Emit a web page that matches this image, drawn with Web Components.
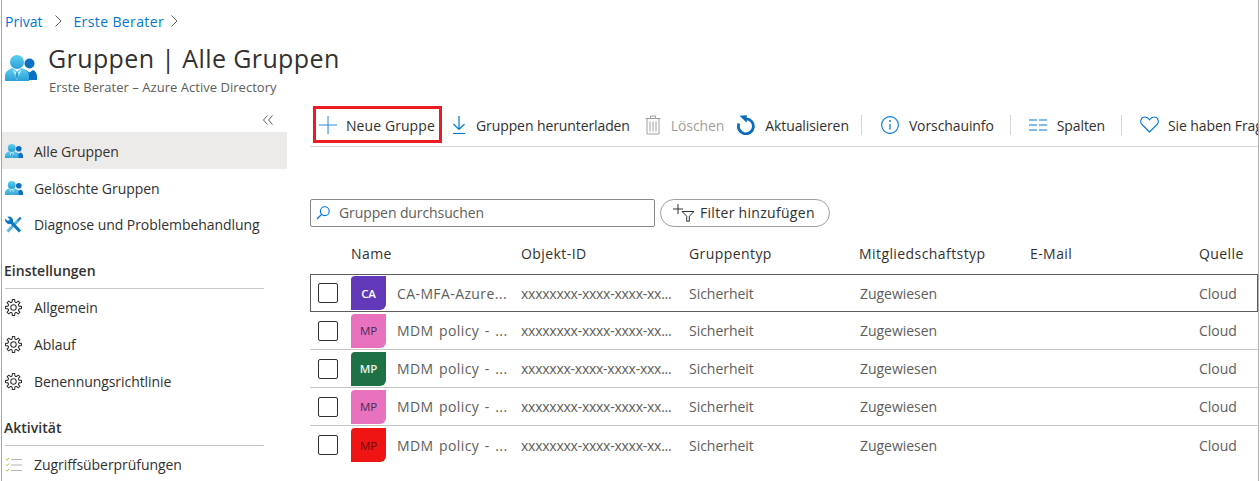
<!DOCTYPE html>
<html lang="de">
<head>
<meta charset="utf-8">
<title>Gruppen</title>
<style>
html, body { margin: 0; padding: 0; background: #fff; }
body { font-family: "Open Sans", "Noto Sans", sans-serif; color: #323130; width: 1260px; height: 481px; overflow: hidden; }
</style>
</head>
<body>
<group-page></group-page>
<script>
// small helpers for repeated icons
function gearPath() {
  let d = "";
  const teeth = 8, cx = 9, cy = 9;
  for (let i = 0; i < teeth; i++) {
    const a = (i / teeth) * Math.PI * 2;
    const step = (Math.PI * 2) / teeth;
    const pts = [
      [5.8, a - step * 0.5], [6.2, a - step * 0.3], [8.5, a - step * 0.18], [8.5, a + step * 0.18], [6.2, a + step * 0.3],
    ];
    pts.forEach((p, j) => {
      const x = (cx + p[0] * Math.cos(p[1])).toFixed(2);
      const y = (cy + p[0] * Math.sin(p[1])).toFixed(2);
      d += (i === 0 && j === 0 ? "M" : "L") + x + " " + y + " ";
    });
  }
  return d + "Z";
}

const ICONS = {
  gear: `<svg width="17" height="17" viewBox="0 0 18 18"><path d="${gearPath()}" fill="none" stroke="#323130" stroke-width="1.1"/><circle cx="9" cy="9" r="2.9" fill="none" stroke="#323130" stroke-width="1.1"/></svg>`,
  wrench: `<svg width="18" height="18" viewBox="0 0 18 18"><path d="M2.500 15.500L13.500 4" stroke="#59b4d9" stroke-width="2.800"/><path d="M13 4.500L15.800 1.600" stroke="#0a7cc4" stroke-width="2.200"/><path d="M6 6L15 15.500" stroke="#0a78c2" stroke-width="3.200"/><path d="M2.200 .8L4.800 3.200 4 4.600 2.400 4.800 .4 2.600A4.200 4.200 0 0 0 5.400 8L8 5.600A4.200 4.200 0 0 0 2.200 .8Z" fill="#0a78c2"/></svg>`,
  review: `<svg width="18" height="18" viewBox="0 0 18 18"><g fill="none" stroke-width="1"><path d="M1 3l1.200 1.200L4 2M1 8.500l1.200 1.200L4 7.500M1 14l1.200 1.200L4 13" stroke="#a5c63b"/><path d="M6 3.500h11M6 9h11M6 14.500h11" stroke="#b4b4b4"/></g></svg>`,
  plus: `<svg width="18" height="18" viewBox="0 0 18 18"><path d="M9 0v18M0 9h18" stroke="#2b88d8" stroke-width="1"/><path d="M9.500 10v8" stroke="#83bdf0" stroke-width="1"/></svg>`,
  download: `<svg width="14" height="18" viewBox="0 0 14 18"><path d="M7 0v13M1.500 8L7 13.400 12.500 8" fill="none" stroke="#0078d4" stroke-width="1.200"/><path d="M1 17.500h12" stroke="#0078d4" stroke-width="1.200"/></svg>`,
  trash: `<svg width="16" height="20" viewBox="0 0 16 20"><g fill="none" stroke="#a19f9d" stroke-width="1"><path d="M.5 3.500h15M5.500 3.500v-2.500h5v2.500M2 3.500v15.500h12v-15.500M5 6.500v10M8 6.500v10M11 6.500v10"/></g></svg>`,
  refresh: `<svg width="18" height="20" viewBox="0 0 18 20"><path d="M9 3.800A7.500 7.500 0 1 1 1.900 8.600" fill="none" stroke="#0f6cbd" stroke-width="2.800"/><path d="M2.500 .8L9.800 .2V7.800Z" fill="#0f6cbd"/></svg>`,
  info: `<svg width="18" height="18" viewBox="0 0 18 18"><circle cx="9" cy="9" r="8.400" fill="none" stroke="#0078d4" stroke-width="1.100"/><path d="M9 7.800v6" stroke="#0078d4" stroke-width="1.200"/><circle cx="9" cy="5" r=".9" fill="#0078d4"/></svg>`,
  columns: `<svg width="18" height="12" viewBox="0 0 18 12"><path d="M0 1h8M10 1h8M0 6h8M10 6h8M0 11h8M10 11h8" stroke="#0078d4" stroke-width="1.100"/></svg>`,
  heart: `<svg width="19" height="17" viewBox="0 0 19 17"><path d="M9.500 16L2 8.500C-.5 6 .8 1 5 1c2.200 0 3.500 1.200 4.500 2.800C10.500 2.200 11.800 1 14 1c4.200 0 5.500 5 3 7.500Z" fill="none" stroke="#0078d4" stroke-width="1.100"/></svg>`,
  search: `<svg width="14" height="14" viewBox="0 0 14 14"><circle cx="8.800" cy="5.200" r="4.400" fill="none" stroke="#0078d4" stroke-width="1.100"/><path d="M5.600 8.400L1 13" stroke="#0078d4" stroke-width="1.300"/></svg>`,
  filter: `<svg width="22" height="18" viewBox="0 0 22 18"><path d="M5 0v10M0 5h10" stroke="#323130" stroke-width="1"/><path d="M9 7.500h12l-4.700 4.700v5h-2.600v-5Z" fill="none" stroke="#323130" stroke-width="1"/></svg>`,
};

let usersCount = 0;
function usersIcon(size) {
  const id = "g" + usersCount++;
  return `<svg width="${size}" height="${size * 0.8125}" viewBox="0 0 32 26">
    <defs><linearGradient id="${id}" x1="0" y1="0" x2="0" y2="1"><stop offset="0" stop-color="#5ed0f2"/><stop offset="1" stop-color="#2a9fd6"/></linearGradient></defs>
    <path d="M20 25V17l1-2 3.500 2.500L28 15c2.500 1 4 3.500 4 6.500V25Z" fill="#0b6fc4"/>
    <circle cx="24.500" cy="8.500" r="5" fill="#0b6fc4"/>
    <path d="M0 26v-5c0-4 3-6.500 7.500-8l4.500 3.500 4.500-3.500c4.500 1.500 7.500 4 7.500 8v5Z" fill="url(#${id})"/>
    <circle cx="12" cy="7" r="7" fill="url(#${id})"/>
    <path d="M7.500 14.500l4.500 11 4.500-11-4.500 3.500Z" fill="#bfeaf8"/>
    <path d="M11 17.500h2l.6 3.500-1.600 4-1.600-4Z" fill="#2a9fd6"/>
  </svg>`;
}

class PageHeader extends HTMLElement {
  constructor() {
    super();
    this.attachShadow({ mode: "open" });
    this.shadowRoot.innerHTML = `<style>
      :host { display: block; height: 104px; padding-left: 3px; }
      .crumbs { display: flex; align-items: center; height: 20px; padding-top: 11px; font-size: 14px; color: #0078d4; }
      .crumbs svg { display: block; }
      .title-row { display: flex; margin-top: 9px; }
      .logo { width: 43px; padding-top: 15px; }
      h1 { margin: 0; font-size: 25px; line-height: 36px; font-weight: 400; color: #323130; letter-spacing: .39px; }
      .sub { font-size: 13px; line-height: 18px; margin: 2px 0 0 1px; color: #605e5c; letter-spacing: .03px; }
    </style>
    <div class="crumbs">
      <span>Privat</span>
      <svg style="margin:0 11px 0 13px" width="7" height="12" viewBox="0 0 7 12"><path d="M.5 .5L6 6 .5 11.500" fill="none" stroke="#605e5c"/></svg>
      <span style="letter-spacing:.38px">Erste Berater</span>
      <svg style="margin-left:7px" width="7" height="12" viewBox="0 0 7 12"><path d="M.5 .5L6 6 .5 11.500" fill="none" stroke="#605e5c"/></svg>
    </div>
    <div class="title-row">
      <div class="logo">${usersIcon(32)}</div>
      <div>
        <h1>Gruppen | Alle Gruppen</h1>
        <div class="sub">Erste Berater – Azure Active Directory</div>
      </div>
    </div>`;
  }
}
customElements.define("page-header", PageHeader);

class SideItem extends HTMLElement {
  constructor() {
    super();
    this.attachShadow({ mode: "open" });
    this.shadowRoot.innerHTML = `<style>
      :host { display: flex; align-items: center; height: 37px; box-sizing: border-box; font-size: 14px; color: #323130; letter-spacing: -.06px; }
      :host([icon="users"]) { padding-top: 1px; }
      :host([selected]) { background: #edebe9; }
      .icon { width: 32px; display: flex; justify-content: flex-start; padding-left: 3px; box-sizing: border-box; }
      .icon svg { display: block; }
    </style>
    <span class="icon"></span><slot></slot>`;
  }
  connectedCallback() {
    const name = this.getAttribute("icon");
    this.shadowRoot.querySelector(".icon").innerHTML = name === "users" ? usersIcon(18) : ICONS[name];
  }
}
customElements.define("side-item", SideItem);

class SideHeading extends HTMLElement {
  constructor() {
    super();
    this.attachShadow({ mode: "open" });
    this.shadowRoot.innerHTML = `<style>
      :host { display: block; margin: 9px 23px 0 3px; height: 37px; box-sizing: border-box; border-bottom: 1px solid #c8c6c4; font-size: 14px; line-height: 24px; padding-top: 7px; text-indent: -1px; font-weight: 600; color: #323130; letter-spacing: .02px; }
    </style><slot></slot>`;
  }
}
customElements.define("side-heading", SideHeading);

class SideNav extends HTMLElement {
  constructor() {
    super();
    this.attachShadow({ mode: "open" });
    this.shadowRoot.innerHTML = `<style>
      :host { display: block; width: 285px; flex: none; }
      .collapse { height: 28px; display: flex; justify-content: flex-end; padding: 0 14px 0 0; box-sizing: border-box; padding-top: 11px; }
    </style>
    <div class="collapse"><svg width="10" height="10" viewBox="0 0 10 10"><path d="M4.500 .5L.5 5l4 4.500M9.500 .5L5.500 5l4 4.500" fill="none" stroke="#605e5c"/></svg></div>
    <slot></slot>`;
  }
}
customElements.define("side-nav", SideNav);

class ToolItem extends HTMLElement {
  constructor() {
    super();
    this.attachShadow({ mode: "open" });
    this.shadowRoot.innerHTML = `<style>
      :host { display: flex; align-items: center; font-size: 14px; color: #323130; white-space: nowrap; letter-spacing: -.1px; }
      :host([disabled]) { color: #a19f9d; }
      .icon { display: flex; justify-content: center; }
      .icon svg { display: block; }
      slot { display: block; padding-top: 2px; }
    </style>
    <span class="icon"></span><slot></slot>`;
  }
  connectedCallback() {
    const ic = this.shadowRoot.querySelector(".icon");
    ic.innerHTML = ICONS[this.getAttribute("icon")];
    ic.style.marginRight = (this.getAttribute("gap") || 10) + "px";
  }
}
customElements.define("tool-item", ToolItem);

class CommandBar extends HTMLElement {
  constructor() {
    super();
    this.attachShadow({ mode: "open" });
    this.shadowRoot.innerHTML = `<style>
      :host { display: flex; align-items: center; height: 41px; padding-bottom: 1px; padding-left: 3px; border-bottom: 1px solid #d6d6d6; overflow: hidden; }
      ::slotted(*) { flex: none; }
    </style><slot></slot>`;
  }
}
customElements.define("command-bar", CommandBar);

class FilterRow extends HTMLElement {
  constructor() {
    super();
    this.attachShadow({ mode: "open" });
    this.shadowRoot.innerHTML = `<style>
      :host { display: flex; gap: 5px; margin-top: 52px; height: 28px; font-size: 14px; }
      .search { width: 345px; box-sizing: border-box; border: 1px solid #8a8886; border-radius: 2px; display: flex; align-items: center; padding-left: 5px; color: #605e5c; letter-spacing: -.1px; }
      .search svg { margin-right: 9px; }
      .pill { width: 170px; box-sizing: border-box; border: 1px solid #a19f9d; border-radius: 14px; display: flex; align-items: center; padding-left: 12px; gap: 5px; color: #323130; letter-spacing: .3px; }
      span { margin-top: -2px; }
      svg { display: block; }
    </style>
    <div class="search">${ICONS.search}<span>Gruppen durchsuchen</span></div>
    <div class="pill">${ICONS.filter}<span>Filter hinzufügen</span></div>`;
  }
}
customElements.define("filter-row", FilterRow);

const GRID = "41px 46px 124px 168px 170px 171px 169px 1fr";

class GroupHead extends HTMLElement {
  constructor() {
    super();
    this.attachShadow({ mode: "open" });
    this.shadowRoot.innerHTML = `<style>
      :host { display: grid; grid-template-columns: 41px 170px 168px 170px 171px 169px 1fr; height: 42px; padding-top: 5px; align-items: center; font-size: 14px; font-weight: 500; color: #323130; letter-spacing: .42px; }
      span:nth-child(2) { padding-left: 1px; }
    </style>
    <span></span><span>Name</span><span>Objekt-ID</span><span>Gruppentyp</span><span>Mitgliedschaftstyp</span><span>E-Mail</span><span>Quelle</span>`;
  }
}
customElements.define("group-head", GroupHead);

class GroupRow extends HTMLElement {
  constructor() {
    super();
    this.attachShadow({ mode: "open" });
  }
  connectedCallback() {
    const a = (k) => this.getAttribute(k) || "";
    this.shadowRoot.innerHTML = `<style>
      :host { display: grid; grid-template-columns: ${GRID}; height: 38px; box-sizing: border-box; align-items: center; font-size: 14px; color: #605e5c; border-bottom: 1px solid #c8c6c4; letter-spacing: -.03px; white-space: nowrap; }
      :host([current]) { border: 1px solid #605e5c; grid-template-columns: 40px 46px 124px 168px 170px 171px 169px 1fr; }
      :host(:last-child) { border-bottom: 0; }
      .box { width: 20px; height: 20px; box-sizing: border-box; border: 1px solid #323130; border-radius: 2px; margin-left: 8px; }
      :host([current]) .box { margin-left: 7px; }
      .av { width: 35px; height: 34px; display: flex; align-items: center; justify-content: center; font-size: 11.500px; letter-spacing: -.2px; border-radius: 4px 0 6px 0; }
      .name { letter-spacing: .4px; word-spacing: 1.500px; }
      .id { font-size: 14px; letter-spacing: -.25px; overflow: hidden; }
      .type { padding-left: 1px; }
    </style>
    <div class="box"></div>
    <div class="av" style="background:${a("bg")};color:${a("fg")};font-weight:${a("fw") || 400}">${a("initials")}</div>
    <div class="name">${a("name")}</div><div class="id">${a("oid")}</div><div>Sicherheit</div><div class="type">Zugewiesen</div><div></div><div>Cloud</div>`;
  }
}
customElements.define("group-row", GroupRow);

class GroupPage extends HTMLElement {
  constructor() {
    super();
    this.attachShadow({ mode: "open" });
    this.shadowRoot.innerHTML = `<style>
      :host { display: block; box-sizing: border-box; width: 1258px; height: 481px; margin-left: 1px; border-left: 1px solid #a6a6a6; border-right: 1px solid #b0b0b0; overflow: hidden; }
      .body { display: flex; }
      main { margin-left: 23px; flex: 1; min-width: 0; }
      .new { box-sizing: border-box; border: 3px solid #ed1c24; height: 37px; display: flex; align-items: center; padding-left: 3px; width: 129px; }
      .sep { width: 1px; height: 20px; background: #d6d6d6; }
    </style>
    <page-header></page-header>
    <div class="body">
      <side-nav>
        <side-item icon="users" selected>Alle Gruppen</side-item>
        <side-item icon="users">Gelöschte Gruppen</side-item>
        <side-item icon="wrench">Diagnose und Problembehandlung</side-item>
        <side-heading>Einstellungen</side-heading>
        <side-item icon="gear">Allgemein</side-item>
        <side-item icon="gear">Ablauf</side-item>
        <side-item icon="gear">Benennungsrichtlinie</side-item>
        <side-heading>Aktivität</side-heading>
        <side-item icon="review">Zugriffsüberprüfungen</side-item>
      </side-nav>
      <main>
        <command-bar>
          <div class="new"><tool-item icon="plus" gap="9" style="letter-spacing:.08px">Neue Gruppe</tool-item></div>
          <tool-item icon="download" gap="10" style="margin-left:10px">Gruppen herunterladen</tool-item>
          <tool-item icon="trash" gap="10" style="margin-left:15px" disabled>Löschen</tool-item>
          <tool-item icon="refresh" gap="10" style="margin-left:13px">Aktualisieren</tool-item>
          <span class="sep" style="margin:0 19px 0 12px"></span>
          <tool-item icon="info" gap="10">Vorschauinfo</tool-item>
          <span class="sep" style="margin:0 18px 0 16px"></span>
          <tool-item icon="columns" gap="10">Spalten</tool-item>
          <span class="sep" style="margin:0 18px 0 16px"></span>
          <tool-item icon="heart" gap="9">Sie haben Fragen?</tool-item>
        </command-bar>
        <filter-row></filter-row>
        <group-head></group-head>
        <div>
          <group-row current initials="CA" bg="#6239b8" fg="#fff" fw="600" name="CA-MFA-Azure..." oid="xxxxxxxx-xxxx-xxxx-xx..."></group-row>
          <group-row initials="MP" bg="#e872bd" fg="#4b2a55" name="MDM policy - ..." oid="xxxxxxxx-xxxx-xxxx-xx..."></group-row>
          <group-row initials="MP" bg="#1e7145" fg="#e6f4ea" fw="600" name="MDM policy - ..." oid="xxxxxxx-xxxx-xxxx-xxx..."></group-row>
          <group-row initials="MP" bg="#e872bd" fg="#4b2a55" name="MDM policy - ..." oid="xxxxxxxx-xxxx-xxxx-xx..."></group-row>
          <group-row initials="MP" bg="#f01515" fg="#6e0b0b" name="MDM policy - ..." oid="xxxxxxxx-xxxx-xxxx-xx..."></group-row>
        </div>
      </main>
    </div>`;
  }
}
customElements.define("group-page", GroupPage);
</script>
</body>
</html>
